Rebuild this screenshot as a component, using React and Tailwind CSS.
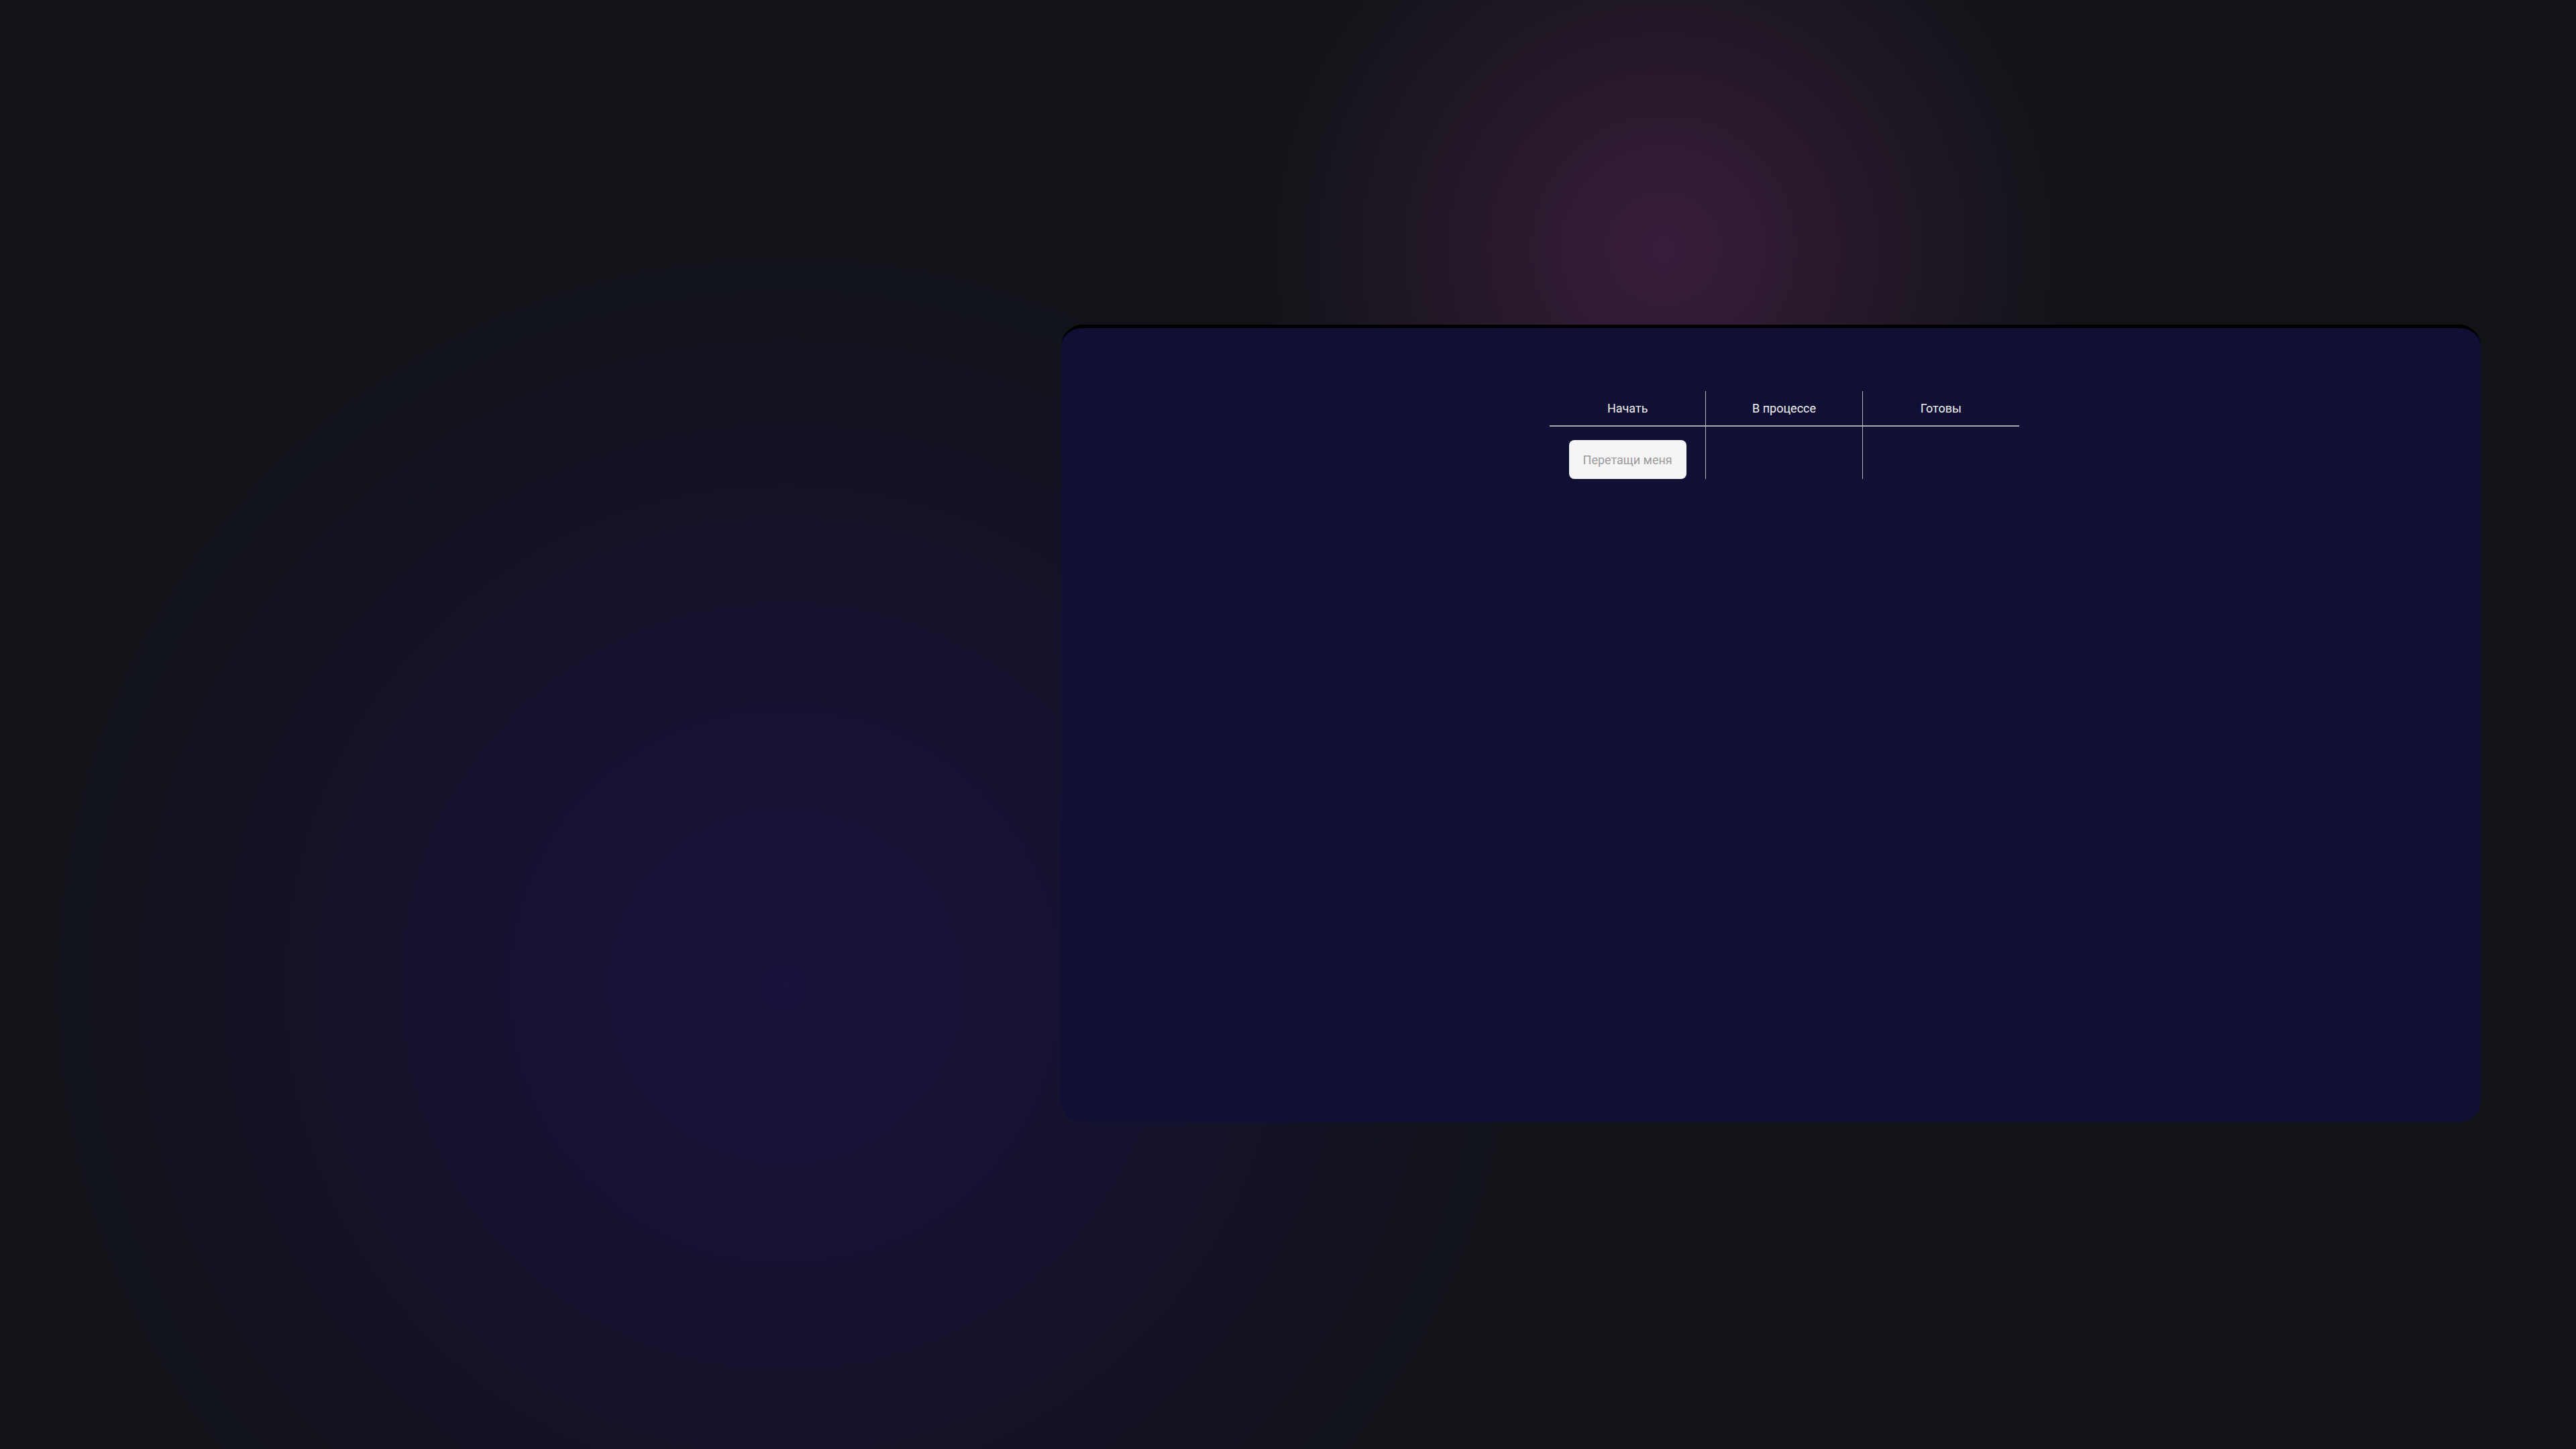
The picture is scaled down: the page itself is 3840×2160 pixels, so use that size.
export default function App() {
  const columns = ['Начать', 'В процессе', 'Готовы']

  return (
    <div className="w-[3840px] h-[2160px] overflow-hidden bg-[#111317] bg-[image:radial-gradient(circle_620px_at_2480px_370px,#3a1c3c_0%,#2a1a2e_35%,rgba(17,19,23,0)_100%),radial-gradient(circle_1150px_at_1170px_1470px,#19123c_0%,#15122e_45%,rgba(17,19,23,0)_100%)] pl-[1582px] pt-[484px] font-['Roboto',sans-serif]">
      <div className="w-[2116px] h-[1189px] rounded-[32px] border-t-[5px] border-black bg-[#0f1033]">
        <div className="ml-[728px] mt-[94px] w-[700px] grid grid-cols-3">
          {columns.map((title, i) => (
            <div
              key={title}
              className={i < 2 ? 'flex flex-col border-r border-[#b4b4b8]' : 'flex flex-col'}
            >
              <div className="h-[53px] flex items-center justify-center border-b-2 border-[#a9a9ad] text-[18px] text-[#f2f2f2]">
                {title}
              </div>
              <div className="h-[78px] flex justify-center pt-[20px]">
                {i === 0 && (
                  <div className="h-[58px] w-[175px] rounded-[8px] bg-[#f5f5f5] flex items-center justify-center text-[18px] text-[#9b9b9b]">
                    Перетащи меня
                  </div>
                )}
              </div>
            </div>
          ))}
        </div>
      </div>
    </div>
  )
}
